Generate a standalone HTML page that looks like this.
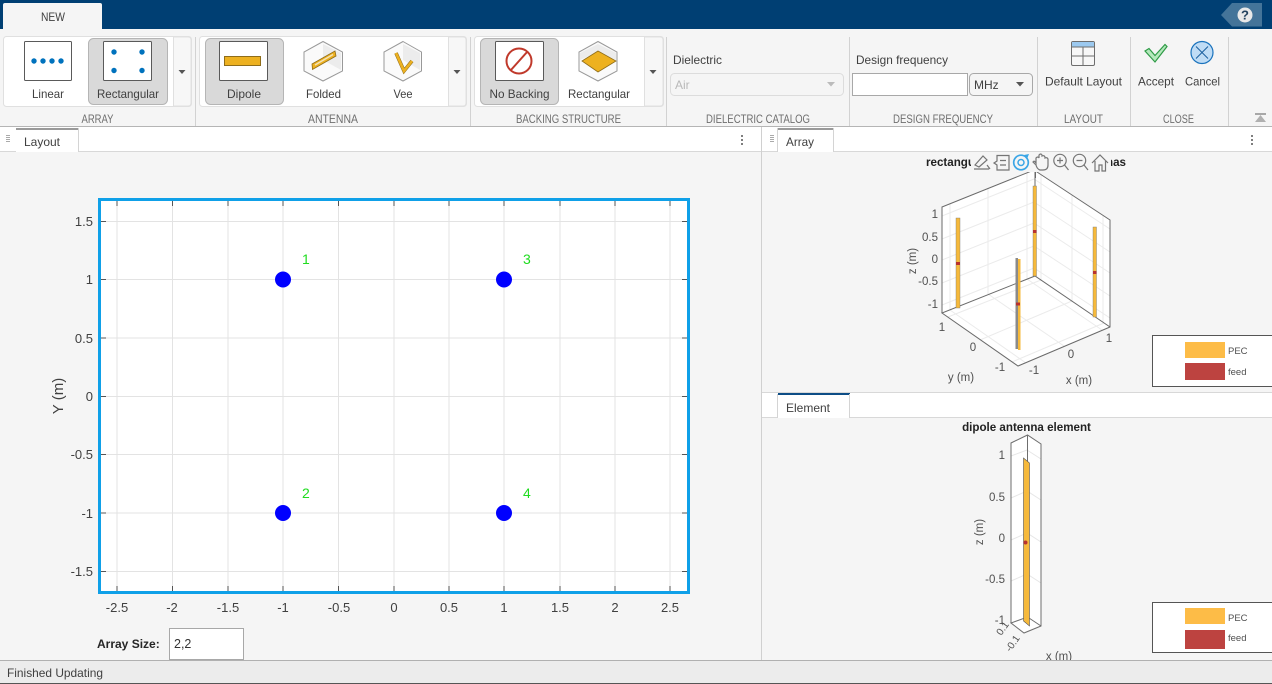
<!DOCTYPE html>
<html><head><meta charset="utf-8"><style>
html,body{margin:0;padding:0;background:#f5f5f5;width:1272px;height:684px;overflow:hidden}
svg{display:block;filter:blur(.3px)}
text{font-family:"Liberation Sans",sans-serif}
.r{font-size:12px;fill:#404040;text-anchor:middle}
.g{font-size:11.5px;fill:#6e6e6e;text-anchor:middle}
.t{font-size:13px;fill:#404040;text-anchor:middle}
.s{font-size:11.5px;fill:#505050;text-anchor:middle}
.e{font-size:11.5px;fill:#505050;text-anchor:end}
.grid line{stroke:#e3e3e3;stroke-width:1}
.dot{fill:#0072bd}
</style></head><body>
<svg width="1272" height="684" viewBox="0 0 1272 684" xmlns="http://www.w3.org/2000/svg">
<rect width="1272" height="684" fill="#f5f5f5"/>
<!-- title bar -->
<rect width="1272" height="29" fill="#003f73"/>
<path d="M3 29V5q0-2 2-2h95q2 0 2 2v24z" fill="#f5f5f5"/>
<text x="53" y="21" class="r" textLength="24" lengthAdjust="spacingAndGlyphs">NEW</text>
<path d="M1232 3H1262V26.500H1232L1221 15z" fill="#447499"/>
<circle cx="1245" cy="15" r="7.500" fill="#e8e8e8"/>
<text x="1245" y="19.500" font-size="13" font-weight="bold" fill="#22405c" text-anchor="middle">?</text>

<!-- ribbon galleries -->
<g fill="#fff" stroke="#e0e0e0">
<rect x="3.500" y="36.500" width="188" height="70" rx="3"/>
<rect x="199.500" y="36.500" width="267" height="70" rx="3"/>
<rect x="474.500" y="36.500" width="189" height="70" rx="3"/>
</g>
<g fill="#f7f7f7" stroke="#e0e0e0">
<path d="M173.500 37H188q3 0 3 3v63q0 3-3 3H173.500z"/>
<path d="M448.500 37H463q3 0 3 3v63q0 3-3 3H448.500z"/>
<path d="M644.500 37H660q3 0 3 3v63q0 3-3 3H644.500z"/>
</g>
<g fill="#d9d9d9" stroke="#b5b5b5">
<rect x="88.500" y="38.500" width="79" height="66" rx="5"/>
<rect x="205.500" y="38.500" width="78" height="66" rx="5"/>
<rect x="480.500" y="38.500" width="78" height="66" rx="5"/>
</g>
<g fill="#fff" stroke="#5a5a5a" stroke-width="1">
<rect x="24.500" y="41.500" width="47" height="39" rx="1"/>
<rect x="103.500" y="41.500" width="48" height="39" rx="1"/>
<rect x="219.500" y="41.500" width="48" height="39" rx="1"/>
<rect x="495.500" y="41.500" width="48" height="39" rx="1"/>
</g>
<g class="dot"><circle cx="34" cy="61" r="2.700"/><circle cx="43" cy="61" r="2.700"/><circle cx="52" cy="61" r="2.700"/><circle cx="61" cy="61" r="2.700"/>
<circle cx="114" cy="52" r="2.700"/><circle cx="142" cy="52" r="2.700"/><circle cx="114" cy="70.500" r="2.700"/><circle cx="142" cy="70.500" r="2.700"/></g>
<rect x="224.500" y="56.500" width="36" height="9" fill="#edb120" stroke="#8f6d1a"/>
<circle cx="519" cy="61" r="12.500" fill="none" stroke="#c0392b" stroke-width="2"/>
<line x1="510.500" y1="70.500" x2="527.500" y2="51.500" stroke="#c0392b" stroke-width="2"/>
<!-- hex icons -->
<g fill="#fafafa" stroke="#999" stroke-width="1">
<polygon points="323,41.500 342.500,52 342.500,71 323,81 304,71 304,52"/>
<polygon points="403,41.500 421.500,52 421.500,71 403,81 384,71 384,52"/>
<polygon points="598,41.500 617,52 617,71 598,81 579,71 579,52"/>
</g>
<g fill="#ececec"><polygon points="323,44 341,53 341,70 323,60"/><polygon points="403,44 420,53 420,70 403,60"/><polygon points="598,44 616,53 616,60 598,52 580,60 580,53"/></g>
<polygon points="312,64 335,51 336,56 312.500,69.500" fill="#edb120" stroke="#8f6d1a" stroke-width=".8"/>
<line x1="315" y1="65" x2="333" y2="54.500" stroke="#f3e3b8" stroke-width="1.500"/>
<path d="M396 53L404 71L412 61" fill="none" stroke="#8f6d1a" stroke-width="3.600"/>
<path d="M396 53L404 71L412 61" fill="none" stroke="#edb120" stroke-width="2.600"/>
<polygon points="582,61 598,51 616,61 598,72" fill="#edb120" stroke="#8f6d1a" stroke-width=".8"/>
<!-- ribbon labels -->
<text x="48" y="98" class="r" textLength="32" lengthAdjust="spacingAndGlyphs">Linear</text>
<text x="128" y="98" class="r" textLength="62" lengthAdjust="spacingAndGlyphs">Rectangular</text>
<text x="244" y="98" class="r" textLength="34" lengthAdjust="spacingAndGlyphs">Dipole</text>
<text x="323.500" y="98" class="r" textLength="35" lengthAdjust="spacingAndGlyphs">Folded</text>
<text x="403" y="98" class="r" textLength="19" lengthAdjust="spacingAndGlyphs">Vee</text>
<text x="519.500" y="98" class="r" textLength="60" lengthAdjust="spacingAndGlyphs">No Backing</text>
<text x="599" y="98" class="r" textLength="62" lengthAdjust="spacingAndGlyphs">Rectangular</text>
<text x="673" y="64" font-size="12" fill="#404040" textLength="49" lengthAdjust="spacingAndGlyphs">Dielectric</text>
<rect x="670.500" y="73.500" width="173" height="22" rx="4" fill="#f5f5f5" stroke="#dcdcdc"/>
<text x="675" y="89" font-size="12" fill="#b8b8b8">Air</text>
<text x="856" y="64" font-size="12" fill="#404040" textLength="92" lengthAdjust="spacingAndGlyphs">Design frequency</text>
<rect x="852.500" y="73.500" width="115" height="22" fill="#fff" stroke="#a8a8a8"/>
<rect x="969.500" y="73.500" width="63" height="22" rx="4" fill="#f5f5f5" stroke="#a8a8a8"/>
<text x="974" y="89" font-size="12" fill="#404040">MHz</text>
<!-- carets -->
<g fill="#555"><polygon points="178.500,70 185.500,70 182,74"/><polygon points="453.500,70 460.500,70 457,74"/><polygon points="649.500,70 656.500,70 653,74"/><polygon points="1016,82 1024,82 1020,86.500"/></g>
<polygon points="827,82 835,82 831,86.500" fill="#bbb"/>
<text x="1083.500" y="85.500" class="r" textLength="77" lengthAdjust="spacingAndGlyphs">Default Layout</text>
<text x="1156" y="85.500" class="r" textLength="36" lengthAdjust="spacingAndGlyphs">Accept</text>
<text x="1202.500" y="85.500" class="r" textLength="35" lengthAdjust="spacingAndGlyphs">Cancel</text>
<text x="97.500" y="123" class="g" textLength="32" lengthAdjust="spacingAndGlyphs">ARRAY</text>
<text x="333" y="123" class="g" textLength="50" lengthAdjust="spacingAndGlyphs">ANTENNA</text>
<text x="568.500" y="123" class="g" textLength="105" lengthAdjust="spacingAndGlyphs">BACKING STRUCTURE</text>
<text x="758" y="123" class="g" textLength="104" lengthAdjust="spacingAndGlyphs">DIELECTRIC CATALOG</text>
<text x="943" y="123" class="g" textLength="100" lengthAdjust="spacingAndGlyphs">DESIGN FREQUENCY</text>
<text x="1083.500" y="123" class="g" textLength="39" lengthAdjust="spacingAndGlyphs">LAYOUT</text>
<text x="1178.500" y="123" class="g" textLength="31" lengthAdjust="spacingAndGlyphs">CLOSE</text>
<!-- group separators -->
<g stroke="#d2d2d2"><line x1="195.500" y1="37" x2="195.500" y2="126"/><line x1="470.500" y1="37" x2="470.500" y2="126"/><line x1="666.500" y1="37" x2="666.500" y2="126"/><line x1="849.500" y1="37" x2="849.500" y2="126"/><line x1="1037.500" y1="37" x2="1037.500" y2="126"/><line x1="1130.500" y1="37" x2="1130.500" y2="126"/><line x1="1228.500" y1="37" x2="1228.500" y2="126"/></g>
<!-- layout/accept/cancel -->
<rect x="1071.500" y="41.500" width="23" height="24" rx="1.500" fill="#f7f7f7" stroke="#6e6e6e"/>
<rect x="1072" y="42" width="22" height="5" fill="#9cc9ef"/>
<path d="M1072 47H1094M1083 47V65M1072 56H1094" stroke="#6e6e6e" fill="none"/>
<path d="M1145 51L1149 48.500L1155 55.500L1165 44.500L1167 46.500L1155 62z" fill="#b4e8bc" stroke="#2e9b46" stroke-width="1.200"/>
<circle cx="1202" cy="52.500" r="11" fill="#bfdcf5" stroke="#1a73bd" stroke-width="1.200"/>
<path d="M1196 46.500L1208 58.500M1208 46.500L1196 58.500" stroke="#1a5f9e" stroke-width="1"/>
<rect x="1255" y="113" width="11" height="2" fill="#a8a8a8"/><polygon points="1260.500,115 1266,122 1255,122" fill="#b0b0b0"/>
<line x1="0" y1="126.500" x2="1272" y2="126.500" stroke="#b5b5b5"/>

<!-- doc tab rows -->
<rect x="0" y="127" width="1272" height="24" fill="#fff"/>
<line x1="0" y1="151.500" x2="1272" y2="151.500" stroke="#d8d8d8"/>
<rect x="16" y="128" width="63" height="2" fill="#9a9a9a"/>
<rect x="778" y="128" width="56" height="2" fill="#9a9a9a"/>
<path d="M78.500 128V152M833.500 128V152M777.500 128V152" stroke="#d4d4d4"/>
<rect x="16" y="150" width="62" height="2" fill="#fff"/><rect x="778" y="150" width="55" height="2" fill="#fff"/>
<text x="24" y="146" font-size="12" fill="#404040" textLength="36" lengthAdjust="spacingAndGlyphs">Layout</text>
<text x="786" y="146" font-size="12" fill="#404040" textLength="28" lengthAdjust="spacingAndGlyphs">Array</text>
<g fill="#555"><circle cx="742" cy="136" r="1"/><circle cx="742" cy="140" r="1"/><circle cx="742" cy="144" r="1"/><circle cx="1252" cy="136" r="1"/><circle cx="1252" cy="140" r="1"/><circle cx="1252" cy="144" r="1"/><circle cx="1252" cy="402" r="1"/><circle cx="1252" cy="406" r="1"/><circle cx="1252" cy="410" r="1"/></g>
<g stroke="#aaa" stroke-dasharray="1 1" stroke-width="4"><line x1="8" y1="135" x2="8" y2="143"/><line x1="772" y1="135" x2="772" y2="143"/><line x1="772" y1="402" x2="772" y2="410"/></g>
<line x1="761.500" y1="127" x2="761.500" y2="660" stroke="#d0d0d0"/>
<line x1="762" y1="392.500" x2="1272" y2="392.500" stroke="#d8d8d8"/>
<rect x="762" y="393" width="510" height="24" fill="#fff"/>
<line x1="762" y1="417.500" x2="1272" y2="417.500" stroke="#d8d8d8"/>
<rect x="778" y="393" width="72" height="2" fill="#0d4d86"/>
<path d="M849.500 394V418M777.500 394V418" stroke="#d4d4d4"/>
<rect x="778" y="416" width="71" height="2" fill="#fff"/>
<text x="786" y="412" font-size="12" fill="#404040" textLength="44" lengthAdjust="spacingAndGlyphs">Element</text>

<!-- 2D plot -->
<rect x="99.500" y="199.500" width="589" height="393" fill="#fff" stroke="#0fa0e8" stroke-width="3"/>
<g class="grid">
<line x1="117" y1="201" x2="117" y2="591"/><line x1="172.500" y1="201" x2="172.500" y2="591"/><line x1="228" y1="201" x2="228" y2="591"/><line x1="283" y1="201" x2="283" y2="591"/><line x1="338.500" y1="201" x2="338.500" y2="591"/><line x1="394" y1="201" x2="394" y2="591"/><line x1="449" y1="201" x2="449" y2="591"/><line x1="504" y1="201" x2="504" y2="591"/><line x1="560" y1="201" x2="560" y2="591"/><line x1="615" y1="201" x2="615" y2="591"/><line x1="670" y1="201" x2="670" y2="591"/>
<line x1="101" y1="221.500" x2="687" y2="221.500"/><line x1="101" y1="279.500" x2="687" y2="279.500"/><line x1="101" y1="338" x2="687" y2="338"/><line x1="101" y1="396.500" x2="687" y2="396.500"/><line x1="101" y1="454.500" x2="687" y2="454.500"/><line x1="101" y1="513" x2="687" y2="513"/><line x1="101" y1="571.500" x2="687" y2="571.500"/>
</g>
<g stroke="#555" stroke-width="1">
<path d="M117 201v5M172.500 201v5M228 201v5M283 201v5M338.500 201v5M394 201v5M449 201v5M504 201v5M560 201v5M615 201v5M670 201v5M117 591v-5M172.500 591v-5M228 591v-5M283 591v-5M338.500 591v-5M394 591v-5M449 591v-5M504 591v-5M560 591v-5M615 591v-5M670 591v-5"/>
<path d="M101 221.500h5M101 279.500h5M101 338h5M101 396.500h5M101 454.500h5M101 513h5M101 571.500h5M687 221.500h-5M687 279.500h-5M687 338h-5M687 396.500h-5M687 454.500h-5M687 513h-5M687 571.500h-5"/>
</g>
<g fill="#0000ff"><circle cx="283" cy="279.500" r="8"/><circle cx="504" cy="279.500" r="8"/><circle cx="283" cy="513" r="8"/><circle cx="504" cy="513" r="8"/></g>
<g font-size="14" fill="#1fdc1f">
<text x="302" y="264">1</text><text x="523" y="264">3</text><text x="302" y="498">2</text><text x="523" y="498">4</text></g>
<g class="t" style="text-anchor:end">
<text x="93" y="226" style="text-anchor:end">1.5</text><text x="93" y="284" style="text-anchor:end">1</text><text x="93" y="343" style="text-anchor:end">0.5</text><text x="93" y="401" style="text-anchor:end">0</text><text x="93" y="459" style="text-anchor:end">-0.5</text><text x="93" y="518" style="text-anchor:end">-1</text><text x="93" y="576" style="text-anchor:end">-1.5</text></g>
<g class="t">
<text x="117" y="612">-2.5</text><text x="172" y="612">-2</text><text x="228" y="612">-1.5</text><text x="283" y="612">-1</text><text x="339" y="612">-0.5</text><text x="394" y="612">0</text><text x="449" y="612">0.5</text><text x="504" y="612">1</text><text x="560" y="612">1.5</text><text x="615" y="612">2</text><text x="670" y="612">2.5</text></g>
<text transform="translate(63,396) rotate(-90)" font-size="15" fill="#404040" text-anchor="middle">Y (m)</text>
<text x="97" y="648" font-size="12" font-weight="bold" fill="#262626">Array Size:</text>
<rect x="169.500" y="628.500" width="74" height="31" fill="#fff" stroke="#a8a8a8"/>
<text x="174" y="648" font-size="12.500" fill="#333">2,2</text>

<!-- 3D array -->
<polygon points="942,207 1034,170 1035,276 942,313" fill="#fff"/>
<polygon points="1034,170 1110,220 1110,327 1035,276" fill="#fff"/>
<polygon points="942,313 1035,276 1110,327 1018,366" fill="#fff"/>
<path d="M942 216L1034 179M942 239L1034 202M942 260L1034 223M942 283L1034 246M942 305L1034 268M1034 179L1110 229M1034 202L1110 252M1034 223L1110 273M1034 246L1110 296M1034 268L1110 318M950 204V310M988 188V294M1027 173V279M1041 175V281M1072 195V302M1103 216V322M950 310L1026 363M988 294L1064 346M1027 279L1102 330M948 317L1041 280M980 340L1072 301M1012 362L1104 323" stroke="#ebebeb" fill="none"/>
<path d="M942 313V207L1034 170L1110 220V327L1018 366L942 313L1035 276L1110 327M1035 276V170" fill="none" stroke="#6a6a6a" stroke-width="1"/>
<g>
<rect x="956" y="218" width="4" height="90" fill="#f6b93b" stroke="#777" stroke-width=".4"/>
<rect x="1033" y="186" width="3.500" height="90" fill="#f6b93b" stroke="#777" stroke-width=".4"/>
<rect x="1093" y="227" width="3.500" height="90" fill="#f6b93b" stroke="#777" stroke-width=".4"/>
<rect x="1015.500" y="258" width="2.500" height="91" fill="#8a8a8a"/>
<rect x="1018" y="259" width="2.500" height="91" fill="#f6b93b"/>
</g>
<g fill="#b8322e"><rect x="956" y="262" width="4" height="3"/><rect x="1033" y="230" width="3.500" height="3"/><rect x="1093" y="271" width="3.500" height="3"/><rect x="1016" y="302.500" width="4" height="3"/></g>
<g class="e"><text x="938" y="218">1</text><text x="938" y="241">0.5</text><text x="938" y="263">0</text><text x="938" y="285">-0.5</text><text x="938" y="308">-1</text></g>
<g class="s"><text x="942" y="331">1</text><text x="973" y="351">0</text><text x="1000" y="371">-1</text><text x="1034" y="374">-1</text><text x="1071" y="358">0</text><text x="1109" y="342">1</text><text x="961" y="381">y (m)</text><text x="1079" y="384">x (m)</text></g>
<text transform="translate(916,261) rotate(-90)" class="s">z (m)</text>
<!-- title + axes toolbar -->
<rect x="920" y="153" width="210" height="19" fill="#f5f5f5"/>
<line x1="1035.500" y1="165" x2="1035.500" y2="178" stroke="#6a6a6a"/>
<text x="926" y="166" font-size="11.600" font-weight="bold" fill="#222">rectangu</text>
<text x="1126" y="166" font-size="11.600" font-weight="bold" fill="#222" text-anchor="end">nas</text>
<rect x="971" y="153" width="140" height="19" fill="#f5f5f5"/>
<g fill="none" stroke="#757575" stroke-width="1.200">
<path d="M974 169H989M975 165L983 156L987 160L979 167zM987 165L990 169"/>
<path d="M997 155.500H1009V170H997V165L994 163L997 161zM1000 160.500H1006M1000 165H1006"/>
<circle cx="1060" cy="160.500" r="6.200"/><path d="M1064.500 165L1068.500 170M1057 160.500H1063M1060 157.500V163.500"/>
<circle cx="1079.500" cy="160.500" r="6.200"/><path d="M1084 165L1088 170M1076.500 160.500H1082.500"/>
<path d="M1092 163L1100 155L1108 163M1095 161V171H1099V165H1102V171H1105.500V161"/>
<path d="M1036 163V158q2-2 3 0V155q2-2 3 0V156q2-1 3 1V158q2-1 3 1V165q0 5-5 5H1040q-3-1-4-5l-3-3q1-2 3 1z"/>
</g>
<circle cx="1021" cy="162.500" r="7.300" fill="none" stroke="#3ba6e6" stroke-width="1.700"/>
<circle cx="1021" cy="162.500" r="3" fill="none" stroke="#3ba6e6" stroke-width="1.500"/>
<path d="M1024 155L1029 154L1027 159z" fill="#3ba6e6"/>

<!-- Element -->
<text x="1026.500" y="431" font-size="11.600" font-weight="bold" fill="#222" text-anchor="middle">dipole antenna element</text>
<polygon points="1011,443 1027.500,435 1041,444 1041,626 1024,633 1011,623" fill="#fff"/>
<path d="M1011 456L1027 450L1041 459M1011 498L1027 491L1041 500M1011 540L1027 533L1041 542M1011 581L1027 574L1041 583" stroke="#e6e6e6" fill="none"/>
<path d="M1011 623V443L1027.500 435L1041 444V626L1024 633L1011 623L1027.500 617L1041 626M1027.500 617V435" fill="none" stroke="#6e6e6e"/>
<polygon points="1023.500,458 1029.500,463 1029.500,626 1023.500,621" fill="#f6b93b" stroke="#555" stroke-width=".6"/>
<circle cx="1025.500" cy="542.500" r="2" fill="#b8322e"/>
<g class="e"><text x="1005" y="459">1</text><text x="1005" y="501">0.5</text><text x="1005" y="542">0</text><text x="1005" y="583">-0.5</text><text x="1005" y="624">-1</text></g>
<text transform="translate(983,532) rotate(-90)" class="s">z (m)</text>
<text transform="translate(1002,628) rotate(-55) translate(0,4)" font-size="10" fill="#505050" text-anchor="middle">0.1</text>
<text transform="translate(1012,643) rotate(-55) translate(0,4)" font-size="10" fill="#505050" text-anchor="middle">-0.1</text>
<text x="1059" y="660" class="s">x (m)</text>

<!-- legends -->
<rect x="1152.500" y="335.500" width="125" height="51" fill="#fff" stroke="#555"/>
<rect x="1185" y="342" width="40" height="16" fill="#fdbc47"/>
<rect x="1185" y="363" width="40" height="17" fill="#bd4340"/>
<text x="1228" y="354" font-size="9.500" fill="#505050">PEC</text>
<text x="1228" y="375" font-size="9.500" fill="#505050">feed</text>
<rect x="1152.500" y="602.500" width="125" height="50" fill="#fff" stroke="#555"/>
<rect x="1185" y="608" width="40" height="16" fill="#fdbc47"/>
<rect x="1185" y="630" width="40" height="19" fill="#bd4340"/>
<text x="1228" y="621" font-size="9.500" fill="#505050">PEC</text>
<text x="1228" y="641" font-size="9.500" fill="#505050">feed</text>

<!-- status bar -->
<rect x="0" y="660" width="1272" height="24" fill="#ececec"/>
<line x1="0" y1="660.500" x2="1272" y2="660.500" stroke="#b0b0b0"/>
<rect x="0" y="683" width="1272" height="1" fill="#555"/>
<text x="7" y="677" font-size="12" fill="#404040" textLength="96" lengthAdjust="spacingAndGlyphs">Finished Updating</text>
</svg>
</body></html>
